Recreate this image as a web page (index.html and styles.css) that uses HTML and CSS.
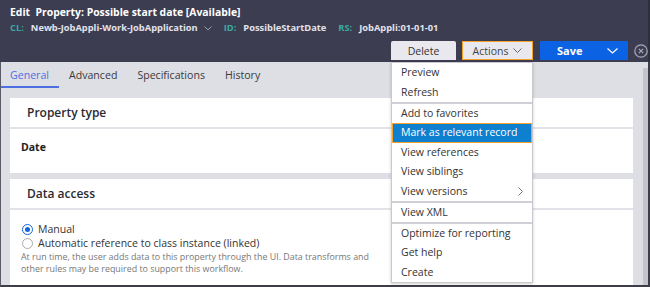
FILE: index.html
```html
<!DOCTYPE html>
<html lang="en">
<head>
  <meta charset="UTF-8" />
  <title>Edit Property</title>
  <link rel="stylesheet" href="styles.css">
</head>
<body>

  <!-- Kopfbereich -->
  <div class="header">
    <div class="title">Edit&nbsp; Property: Possible start date [Available]</div>
    <div class="meta">
      <span class="lbl">CL:</span>
      <span class="val">Newb-JobAppli-Work-JobApplication</span>
      <svg class="chev" width="8" height="5" viewBox="0 0 8 5"><polyline points="0.5,0.5 4,4 7.5,0.5" fill="none" stroke="#9a9cb0" stroke-width="1"/></svg>
      <span class="lbl gap">ID:</span>
      <span class="val">PossibleStartDate</span>
      <span class="lbl gap">RS:</span>
      <span class="val">JobAppli:01-01-01</span>
    </div>
    <div class="toolbar">
      <div class="menu-wrap">
        <button class="btn btn-delete">Delete</button>
        <button class="btn btn-actions">Actions
          <svg width="9" height="5" viewBox="0 0 9 5"><polyline points="0.5,0.5 4.5,4.5 8.5,0.5" fill="none" stroke="#666" stroke-width="1"/></svg>
        </button>
        <ul class="dropdown">
          <li>Preview</li>
          <li>Refresh</li>
          <li class="sep"></li>
          <li>Add to favorites</li>
          <li class="active">Mark as relevant record</li>
          <li>View references</li>
          <li>View siblings</li>
          <li class="sub">View versions
            <svg width="5" height="9" viewBox="0 0 5 9"><polyline points="0.5,0.5 4.5,4.5 0.5,8.5" fill="none" stroke="#777" stroke-width="1"/></svg>
          </li>
          <li class="sep"></li>
          <li>View XML</li>
          <li class="sep"></li>
          <li>Optimize for reporting</li>
          <li>Get help</li>
          <li>Create</li>
        </ul>
      </div>
      <button class="btn btn-save"><span>Save</span>
        <svg width="11" height="6" viewBox="0 0 11 6"><polyline points="0.5,0.5 5.5,5 10.5,0.5" fill="none" stroke="#fff" stroke-width="1.2"/></svg>
      </button>
      <svg class="close" width="14" height="14" viewBox="0 0 14 14">
        <circle cx="7" cy="7" r="6.2" fill="none" stroke="#a8a9b8" stroke-width="1.2"/>
        <path d="M4.8 4.8 L9.2 9.2 M9.2 4.8 L4.8 9.2" stroke="#a8a9b8" stroke-width="1.2"/>
      </svg>
    </div>
  </div>

  <!-- Arbeitsbereich -->
  <div class="workspace">
    <div class="content">
      <div class="tabs">
        <div class="tab current">General</div>
        <div class="tab">Advanced</div>
        <div class="tab">Specifications</div>
        <div class="tab">History</div>
      </div>

      <div class="card card-type">
        <div class="card-head">Property type</div>
        <div class="card-body">
          <div class="strong">Date</div>
        </div>
      </div>

      <div class="card card-access">
        <div class="card-head">Data access</div>
        <div class="card-body">
          <label class="radio"><span class="dot on"></span>Manual</label>
          <label class="radio"><span class="dot"></span>Automatic reference to class instance (linked)</label>
          <p class="hint">At run time, the user adds data to this property through the UI. Data transforms and other rules may be required to support this workflow.</p>
        </div>
      </div>
    </div>
    <div class="scrollbar">
      <div class="arrow"></div>
      <div class="track"></div>
    </div>
  </div>

</body>
</html>
```

FILE: styles.css
```css
* {
  margin: 0;
  padding: 0;
  box-sizing: border-box;
}

html, body {
  height: 100%;
  overflow: hidden;
}

body {
  font-family: 'Open Sans', 'Noto Sans', sans-serif;
  background: #dedfe4;
  display: flex;
  flex-direction: column;
}

/* Kopf */
.header {
  background: #3c3d51;
  color: #fff;
  height: 62px;
  padding: 5px 0 0 10px;
  border-right: 2px solid #2e2f3d;
}

.title {
  font-size: 10.4px;
  font-weight: 700;
  line-height: 15px;
}

.meta {
  font-size: 9.3px;
  font-weight: 700;
  line-height: 14px;
  margin-top: 1px;
  display: flex;
  align-items: center;
}

.meta .lbl {
  color: #3aa8a1;
  margin-right: 7px;
}

.meta .lbl.gap {
  margin-left: 12px;
}

.meta .val {
  color: #e2e2ea;
}

.meta .chev {
  margin-left: 6px;
}

.toolbar {
  display: flex;
  justify-content: flex-end;
  align-items: center;
  margin-top: 6px;
}

.menu-wrap {
  position: relative;
  display: flex;
  gap: 6px;
}

.btn {
  font-family: inherit;
  height: 19px;
  border: none;
  font-size: 10.5px;
  color: #333;
  background: #e8e8ee;
  display: flex;
  align-items: center;
  justify-content: center;
  border-radius: 2px 2px 0 0;
}

.btn-delete {
  width: 65px;
}

.btn-actions {
  width: 71px;
  border: 1.5px solid #f3a329;
  border-radius: 0;
  color: #444;
  gap: 5px;
}

.btn-save {
  width: 88px;
  margin-left: 7px;
  background: #0b63e3;
  color: #fff;
  font-weight: 700;
  font-size: 11px;
  border-radius: 1px;
  justify-content: space-between;
  padding: 0 10px 0 17px;
}

.close {
  margin-left: 6px;
}

/* Aktionsmenü */
.dropdown {
  position: absolute;
  top: 21px;
  left: 0;
  right: 0;
  list-style: none;
  background: #fff;
  border: 1px solid #c9c9cf;
  box-shadow: 0 1px 3px rgba(0, 0, 0, 0.2);
  z-index: 5;
}

.dropdown li {
  font-size: 10.5px;
  color: #333;
  line-height: 19.5px;
  padding: 0 9px;
  white-space: nowrap;
}

.dropdown li.sep {
  height: 1.5px;
  line-height: 0;
  padding: 0;
  background: #cfcfd6;
}

.dropdown li.active {
  background: #0f7fd0;
  color: #fff;
  outline: 1.5px solid #f3a329;
  outline-offset: -1.5px;
}

.dropdown li.sub {
  display: flex;
  justify-content: space-between;
  align-items: center;
}

/* Arbeitsbereich */
.workspace {
  flex: 1;
  display: flex;
  border-left: 1px solid #5a5b66;
  border-bottom: 2px solid #3e3e48;
  border-right: 2px solid #3e3e48;
  min-height: 0;
}

.content {
  flex: 1;
  padding-right: 10px;
  overflow: hidden;
}

.tabs {
  display: flex;
  height: 26px;
  align-items: stretch;
}

.tab {
  font-size: 10.6px;
  color: #3a3a3a;
  padding: 0 10px;
  display: flex;
  align-items: center;
  border-bottom: 2px solid transparent;
  padding-top: 1px;
}

.tab:first-child {
  padding-left: 9px;
}

.tab.current {
  color: #4c6fe2;
  border-bottom-color: #4c6fe2;
}

.card {
  background: #fff;
  margin-left: 9px;
}

.card-type {
  margin-top: 10px;
}

.card-access {
  margin-top: 6px;
}

.card-head {
  height: 31px;
  line-height: 30px;
  font-size: 12px;
  font-weight: 600;
  color: #2a2a33;
  padding-left: 17px;
  border-bottom: 2px solid #e2e2e8;
}

.card-type .card-body {
  height: 44px;
  padding: 11px 11px;
}

.strong {
  font-size: 10.5px;
  font-weight: 700;
  color: #222;
}

.card-access .card-body {
  padding: 12px 11px 10px;
}

.radio {
  display: flex;
  align-items: center;
  font-size: 10.5px;
  color: #333;
  line-height: 14px;
  gap: 5px;
  padding-left: 1px;
}

.dot {
  width: 11px;
  height: 11px;
  border-radius: 50%;
  border: 1px solid #aaa;
  background: #fff;
  position: relative;
}

.dot.on {
  border-color: #1665d8;
}

.dot.on::after {
  content: "";
  position: absolute;
  top: 2px;
  left: 2px;
  width: 5px;
  height: 5px;
  border-radius: 50%;
  background: #1665d8;
}

.hint {
  font-size: 8.9px;
  color: #777;
  line-height: 12px;
  margin-top: 1px;
  width: 356px;
}

.scrollbar {
  width: 5px;
  display: flex;
  flex-direction: column;
}

.scrollbar .arrow {
  height: 6px;
}

.scrollbar .track {
  flex: 1;
  background: #c4c5cb;
}
```
